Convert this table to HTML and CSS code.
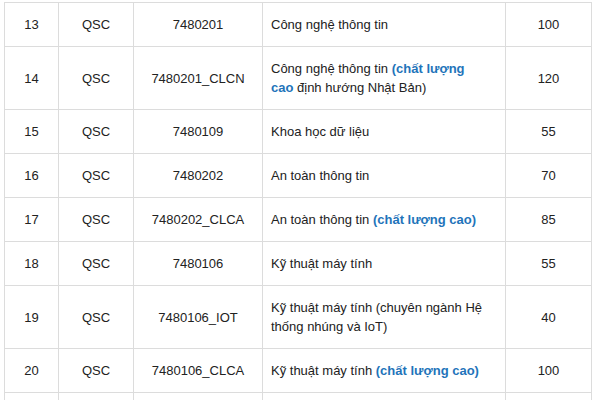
FILE: index.html
```html
<!DOCTYPE html>
<html lang="vi">
<head>
<meta charset="utf-8">
<link rel="stylesheet" href="styles.css">
</head>
<body>
<table class="tbl">
  <colgroup>
    <col class="c-stt"><col class="c-ma"><col class="c-nganh"><col class="c-ten"><col class="c-ct">
  </colgroup>
  <tbody>
    <tr><td>13</td><td>QSC</td><td>7480201</td><td class="ten">Công nghệ thông tin</td><td>100</td></tr>
    <tr><td>14</td><td>QSC</td><td>7480201_CLCN</td><td class="ten">Công nghệ thông tin <b class="hl">(chất lượng<br>cao</b> định hướng Nhật Bản)</td><td>120</td></tr>
    <tr><td>15</td><td>QSC</td><td>7480109</td><td class="ten">Khoa học dữ liệu</td><td>55</td></tr>
    <tr><td>16</td><td>QSC</td><td>7480202</td><td class="ten">An toàn thông tin</td><td>70</td></tr>
    <tr><td>17</td><td>QSC</td><td>7480202_CLCA</td><td class="ten">An toàn thông tin <b class="hl">(chất lượng cao)</b></td><td>85</td></tr>
    <tr><td>18</td><td>QSC</td><td>7480106</td><td class="ten">Kỹ thuật máy tính</td><td>55</td></tr>
    <tr><td>19</td><td>QSC</td><td>7480106_IOT</td><td class="ten">Kỹ thuật máy tính (chuyên ngành Hệ<br>thống nhúng và IoT)</td><td>40</td></tr>
    <tr><td>20</td><td>QSC</td><td>7480106_CLCA</td><td class="ten">Kỹ thuật máy tính <b class="hl">(chất lượng cao)</b></td><td>100</td></tr>
    <tr><td>&nbsp;</td><td>&nbsp;</td><td>&nbsp;</td><td class="ten">&nbsp;</td><td>&nbsp;</td></tr>
  </tbody>
</table>
</body>
</html>
```

FILE: styles.css
```css
html, body {
  margin: 0;
  padding: 0;
  background: #fff;
  overflow: hidden;
}
body {
  font-family: "Liberation Sans", Arial, sans-serif;
  font-size: 13px;
  color: #222;
}
.tbl {
  margin: 2px 0 0 4px;
  width: 587px;
  table-layout: fixed;
  border-collapse: collapse;
}
.c-stt { width: 54px; }
.c-ma { width: 75px; }
.c-nganh { width: 129px; }
.c-ten { width: 243px; }
.c-ct { width: 86px; }
.tbl td {
  border: 1px solid #dcdcdc;
  padding: 12px 8px;
  line-height: 19px;
  text-align: center;
  vertical-align: middle;
}
.tbl td.ten {
  text-align: left;
  padding-right: 4px;
  white-space: nowrap;
}
.hl {
  color: #1f74ba;
  font-weight: bold;
}
```
